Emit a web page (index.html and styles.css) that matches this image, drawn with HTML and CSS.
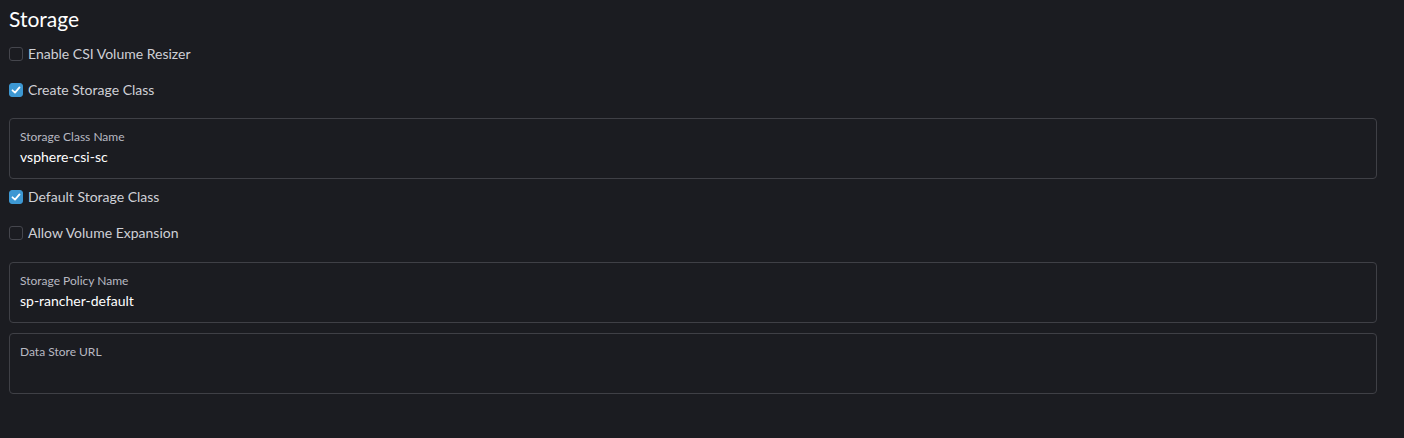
FILE: index.html
```html
<!DOCTYPE html>
<html>
<head>
<meta charset="utf-8">
<link rel="stylesheet" href="styles.css">
</head>
<body>
<div class="page">
  <h2 class="title">Storage</h2>
  <label class="check"><span class="box"></span><span>Enable CSI Volume Resizer</span></label>
  <label class="check"><span class="box checked"><svg viewBox="0 0 14 14" width="14" height="14"><path d="M3.5 7.3 L6 9.6 L10.5 4.4" fill="none" stroke="#fff" stroke-width="1.8" stroke-linecap="round" stroke-linejoin="round"/></svg></span><span>Create Storage Class</span></label>
  <div class="field f1">
    <div class="flabel">Storage Class Name</div>
    <div class="fvalue">vsphere-csi-sc</div>
  </div>
  <label class="check"><span class="box checked"><svg viewBox="0 0 14 14" width="14" height="14"><path d="M3.5 7.3 L6 9.6 L10.5 4.4" fill="none" stroke="#fff" stroke-width="1.8" stroke-linecap="round" stroke-linejoin="round"/></svg></span><span>Default Storage Class</span></label>
  <label class="check"><span class="box"></span><span>Allow Volume Expansion</span></label>
  <div class="field f2">
    <div class="flabel">Storage Policy Name</div>
    <div class="fvalue">sp-rancher-default</div>
  </div>
  <div class="field f3">
    <div class="flabel">Data Store URL</div>
    <div class="fvalue"></div>
  </div>
</div>
</body>
</html>
```
FILE: styles.css
```css
html, body {
  margin: 0;
  padding: 0;
  background: #1b1c21;
  height: 100%;
}
body {
  font-family: Lato, "Noto Sans", sans-serif;
  color: #d2d2d8;
}
.page {
  padding: 6px 27px 0 9px;
  display: flex;
  flex-direction: column;
}
.title {
  margin: 0 0 13px 0;
  font-size: 21px;
  font-weight: 400;
  line-height: 25px;
  color: #ffffff;
}
.check {
  display: flex;
  align-items: center;
  gap: 5px;
  height: 20px;
  font-size: 14px;
  line-height: 20px;
  color: #cfd0d6;
  margin-bottom: 16px;
}
.field-gap-default { margin-top: 2px; }
.box {
  width: 14px;
  height: 14px;
  box-sizing: border-box;
  border: 1px solid #45464d;
  border-radius: 3px;
  background: #1b1c21;
  display: flex;
}
.box.checked {
  background: #3d98d3;
  border-color: #3d98d3;
}
.box svg { margin: -1px; }
.field {
  box-sizing: border-box;
  height: 61px;
  border: 1px solid #3f4046;
  border-radius: 4px;
  padding: 10px 10px 0 10px;
  margin-bottom: 8px;
}
.f1 { margin-top: 2px; }
.f2 { margin-top: 3px; margin-bottom: 10px; }
.flabel {
  font-size: 12px;
  line-height: 16px;
  color: #b8b9c2;
}
.fvalue {
  font-size: 14px;
  line-height: 20px;
  color: #ffffff;
  margin-top: 2px;
}
```
